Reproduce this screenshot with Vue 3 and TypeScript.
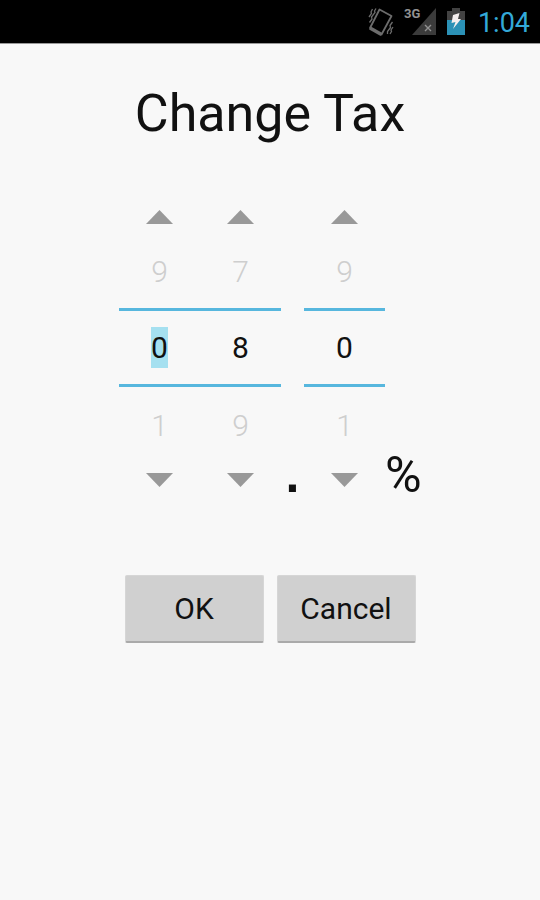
<script setup lang="ts">
import { computed, onMounted, ref } from 'vue'

interface Wheel {
  id: string
  label: string
  value: number
}

const wheels = ref<Wheel[]>([
  { id: 'tens', label: 'Tens', value: 0 },
  { id: 'ones', label: 'Ones', value: 8 },
  { id: 'tenths', label: 'Tenths', value: 0 },
])
const groups = computed(() => [
  { id: 'whole', wheels: wheels.value.slice(0, 2) },
  { id: 'fraction', wheels: wheels.value.slice(2) },
])

const wrap = (n: number): number => (n + 10) % 10

function step(wheel: Wheel, by: number): void {
  wheel.value = wrap(wheel.value + by)
}

function edit(wheel: Wheel, event: Event): void {
  const input = event.target as HTMLInputElement
  const digit = input.value.replace(/\D/g, '').slice(-1)
  if (digit !== '') wheel.value = Number(digit)
  input.value = String(wheel.value)
}

onMounted(() => {
  const first = document.getElementById('tens') as HTMLInputElement | null
  first?.focus()
  first?.select()
})
</script>

<template>
  <div class="screen">
    <header class="status">
      <svg class="vibrate" width="26" height="30" viewBox="0 0 26 30" fill="none" stroke="#6c6c6c">
        <path d="M11.500 2.500 L23.500 9 L13.500 27.500 L2 21 Z" stroke-width="1.800" stroke-linejoin="round" />
        <path d="M2 21 L13.500 27.500" stroke-width="3.600" />
        <path d="M8 1.500 L6.500 4 L7 5.500 L3.500 10 L4 12 L1.500 15.500 M4.500 2 L3 5 L3.500 6.500 L1 10" stroke-width="1.300" />
        <path d="M24.500 15 L22 18.500 L22.500 20.500 L19.500 24.500 L19.500 27 M25 20 L23 23 L23.500 24.500 L22 27" stroke-width="1.300" />
      </svg>
      <div class="network">
        <svg width="24" height="27" viewBox="0 0 24 27">
          <path d="M0 27 L24 0 V27 Z" fill="#3b3b3b" />
          <path d="M13 17 L19 23 M19 17 L13 23" stroke="#929292" stroke-width="1.400" />
        </svg>
        <span class="network-type">3G</span>
      </div>
      <svg class="battery" width="18" height="27" viewBox="0 0 18 27">
        <path d="M5 0 H13 V3 H18 V12 H0 V3 H5 Z" fill="#424242" />
        <path d="M0 12 H18 V27 H0 Z" fill="#2b91b6" />
        <path d="M6 7 L12.500 5 L11 11 L14 11 L6 21 L8.500 14 L4.500 15 Z" fill="#f4eeee" />
      </svg>
      <time class="clock">1:04</time>
    </header>

    <main class="content">
      <h1 class="title">Change Tax</h1>

      <div class="picker">
        <template v-for="(group, index) in groups" :key="group.id">
          <span v-if="index > 0" class="point">.</span>
          <div v-for="wheel in group.wheels" :key="wheel.id" class="wheel">
            <button type="button" class="arrow" :aria-label="`Decrease ${wheel.label}`" @click="step(wheel, -1)">
              <svg width="27" height="14" viewBox="0 0 27 14"><path d="M0 14 L13.500 0 L27 14 Z" fill="#999" /></svg>
            </button>
            <span class="neighbour previous">{{ wrap(wheel.value - 1) }}</span>
            <div class="current">
              <input
                :id="wheel.id"
                class="digit"
                type="text"
                inputmode="numeric"
                :aria-label="wheel.label"
                :value="wheel.value"
                @input="edit(wheel, $event)"
              />
            </div>
            <span class="neighbour next">{{ wrap(wheel.value + 1) }}</span>
            <button type="button" class="arrow" :aria-label="`Increase ${wheel.label}`" @click="step(wheel, 1)">
              <svg width="27" height="14" viewBox="0 0 27 14"><path d="M0 0 H27 L13.500 14 Z" fill="#999" /></svg>
            </button>
          </div>
        </template>
        <span class="percent">%</span>
      </div>

      <div class="actions">
        <button type="button" class="action">OK</button>
        <button type="button" class="action">Cancel</button>
      </div>
    </main>
  </div>
</template>

<style>
body {
  margin: 0;
  background: #f8f8f8;
}
</style>

<style scoped>
.screen {
  min-height: 100vh;
  background: #f8f8f8;
  color: #111;
  font-family: Roboto, "Liberation Sans", sans-serif;
}

.status {
  display: flex;
  align-items: center;
  justify-content: flex-end;
  height: 43px;
  padding-right: 10px;
  background: #000;
  border-bottom: 1px solid #999;
}

.vibrate {
  margin-right: 10px;
}

.network {
  position: relative;
  display: flex;
  padding-left: 8px;
  margin-right: 11px;
}

.network-type {
  position: absolute;
  top: 0;
  left: 0;
  color: #929292;
  font-size: 13px;
  font-weight: 700;
  line-height: 12px;
}

.battery {
  margin-right: 13px;
}

.clock {
  padding-top: 3px;
  color: #33a9d8;
  font-size: 27px;
  line-height: 40px;
}

.content {
  display: flex;
  flex-direction: column;
  align-items: center;
  padding: 40px 0;
}

.title {
  margin: 0;
  font-size: 52px;
  font-weight: 400;
  line-height: 60px;
}

.picker {
  display: flex;
  align-items: flex-end;
  margin-top: 51px;
}

.wheel {
  display: flex;
  flex-direction: column;
  width: 81px;
}

.arrow {
  display: flex;
  align-items: center;
  justify-content: center;
  height: 44px;
  padding: 0;
  border: 0;
  background: none;
}

.neighbour {
  color: #cecece;
  font-size: 30px;
  font-weight: 300;
  line-height: 65px;
  text-align: center;
}

.previous {
  padding-bottom: 4px;
}

.next {
  padding-top: 6px;
}

.current {
  display: flex;
  align-items: center;
  height: 73px;
  border: solid #57b7de;
  border-width: 3px 0;
}

.digit {
  width: 100%;
  height: 41px;
  padding: 0;
  border: 0;
  outline: 0;
  background: none;
  color: #111;
  font: 400 30px/41px Roboto, "Liberation Sans", sans-serif;
  text-align: center;
}

.digit::selection {
  background: #a5e0f0;
  color: #111;
}

.point,
.percent {
  font-size: 50px;
  line-height: 54px;
  text-align: center;
}

.point {
  width: 23px;
  font-family: "Liberation Sans", sans-serif;
  font-weight: 700;
}

.percent {
  width: 36px;
}

.actions {
  display: flex;
  gap: 13px;
  margin-top: 73px;
}

.action {
  width: 139px;
  height: 68px;
  padding: 0;
  border: 1px solid #d6d6d6;
  border-bottom: 2px solid #aaa;
  border-radius: 2px;
  background: #d0d0d0;
  color: #111;
  font: 400 30px/36px Roboto, "Liberation Sans", sans-serif;
}
</style>
